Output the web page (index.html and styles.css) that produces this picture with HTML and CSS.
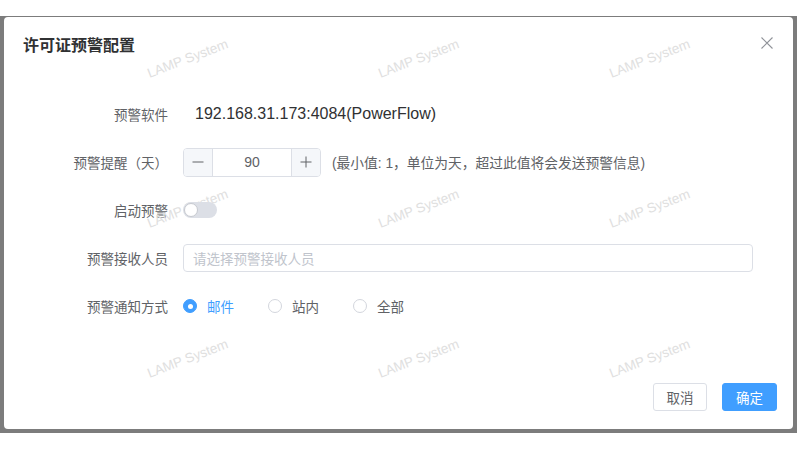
FILE: index.html
```html
<!DOCTYPE html>
<html lang="zh-CN">
<head>
    <meta charset="UTF-8">
    <meta name="viewport" content="width=device-width, initial-scale=1.0">
    <title>许可证预警配置</title>
    <link rel="stylesheet" href="styles.css">
</head>
<body>
    <div class="frame">
        <div class="dialog">
            <div class="watermark">
                <span>LAMP System</span><span>LAMP System</span><span>LAMP System</span>
                <span>LAMP System</span><span>LAMP System</span><span>LAMP System</span>
                <span>LAMP System</span><span>LAMP System</span><span>LAMP System</span>
            </div>

            <div class="dialog-header">
                <span class="dialog-title">许可证预警配置</span>
                <span class="close">
                    <svg width="12" height="12" viewBox="0 0 12 12">
                        <path d="M0.5 0.5 L11.5 11.5 M11.5 0.5 L0.5 11.5" stroke="#909399" stroke-width="1.1" fill="none"/>
                    </svg>
                </span>
            </div>

            <div class="dialog-body">
                <div class="form-row">
                    <label class="form-label">预警软件</label>
                    <div class="form-content">
                        <span class="plain-value">192.168.31.173:4084(PowerFlow)</span>
                    </div>
                </div>

                <div class="form-row">
                    <label class="form-label">预警提醒（天）</label>
                    <div class="form-content">
                        <div class="input-number">
                            <span class="step minus">
                                <svg width="12" height="12" viewBox="0 0 12 12"><path d="M0.5 6 H11.5" stroke="#606266" stroke-width="1"/></svg>
                            </span>
                            <span class="number">90</span>
                            <span class="step plus">
                                <svg width="12" height="12" viewBox="0 0 12 12"><path d="M0.5 6 H11.5 M6 0.5 V11.5" stroke="#606266" stroke-width="1"/></svg>
                            </span>
                        </div>
                        <span class="hint">(最小值: 1，单位为天，超过此值将会发送预警信息)</span>
                    </div>
                </div>

                <div class="form-row">
                    <label class="form-label">启动预警</label>
                    <div class="form-content">
                        <span class="switch"><span class="knob"></span></span>
                    </div>
                </div>

                <div class="form-row">
                    <label class="form-label">预警接收人员</label>
                    <div class="form-content">
                        <div class="select">请选择预警接收人员</div>
                    </div>
                </div>

                <div class="form-row">
                    <label class="form-label">预警通知方式</label>
                    <div class="form-content">
                        <span class="radio checked"><span class="dot"></span>邮件</span>
                        <span class="radio"><span class="dot"></span>站内</span>
                        <span class="radio"><span class="dot"></span>全部</span>
                    </div>
                </div>
            </div>

            <div class="dialog-footer">
                <button class="btn">取消</button>
                <button class="btn btn-primary">确定</button>
            </div>
        </div>
    </div>
</body>
</html>
```

FILE: styles.css
```css
body {
    margin: 0;
    padding: 0;
    background-color: #ffffff;
    font-family: "Liberation Sans", "Noto Sans CJK SC", sans-serif;
    color: #606266;
}
.frame {
    margin-top: 16px;
    width: 797px;
    height: 417px;
    box-sizing: border-box;
    padding: 1px 4px 4px 4px;
    background-color: #7c7c7c;
}
.dialog {
    position: relative;
    height: 100%;
    background: #ffffff;
    border-radius: 4px;
    display: flex;
    flex-direction: column;
    overflow: hidden;
}
.watermark {
    position: absolute;
    left: 68px;
    top: -34px;
    display: grid;
    grid-template-columns: repeat(3, 231px);
    grid-template-rows: repeat(3, 150px);
    place-items: center;
    pointer-events: none;
}
.watermark span {
    font-size: 13.5px;
    color: #e0e0e0;
    transform: rotate(-21deg);
    white-space: nowrap;
}
.dialog-header {
    position: relative;
    height: 54px;
    box-sizing: border-box;
    padding: 20px 20px 0 19px;
}
.dialog-title {
    font-size: 16px;
    line-height: 18px;
    font-weight: bold;
    color: #303133;
}
.close {
    position: absolute;
    top: 20px;
    right: 20px;
    width: 12px;
    height: 12px;
}
.close svg, .step svg {
    display: block;
}
.dialog-body {
    padding-top: 28px;
}
.form-row {
    display: flex;
    align-items: center;
    height: 30px;
    margin-bottom: 18px;
}
.form-label {
    width: 164px;
    text-align: right;
    font-size: 13.5px;
    color: #606266;
    white-space: nowrap;
}
.form-content {
    display: flex;
    align-items: center;
    margin-left: 15px;
    font-size: 13.5px;
}
.plain-value {
    padding-left: 12px;
    font-size: 16px;
    color: #303133;
}
.input-number {
    display: flex;
    width: 138px;
    height: 29px;
    box-sizing: border-box;
    border: 1px solid #dcdfe6;
    border-radius: 4px;
    overflow: hidden;
}
.step {
    width: 28px;
    display: flex;
    align-items: center;
    justify-content: center;
    background-color: #f5f7fa;
}
.minus {
    border-right: 1px solid #dcdfe6;
}
.plus {
    border-left: 1px solid #dcdfe6;
}
.number {
    flex: 1;
    display: flex;
    align-items: center;
    justify-content: center;
    font-size: 14px;
    color: #606266;
}
.hint {
    margin-left: 11px;
    font-size: 13.75px;
    color: #606266;
}
.switch {
    position: relative;
    width: 34px;
    height: 16px;
    border-radius: 8px;
    background-color: #dcdfe6;
}
.knob {
    position: absolute;
    left: 1px;
    top: 1px;
    width: 12px;
    height: 12px;
    border-radius: 50%;
    background: #ffffff;
    border: 1px solid #c6c9cf;
}
.select {
    width: 570px;
    height: 28px;
    box-sizing: border-box;
    padding-left: 9px;
    display: flex;
    align-items: center;
    border: 1px solid #dcdfe6;
    border-radius: 4px;
    color: #c0c4cc;
}
.radio {
    display: flex;
    align-items: center;
    margin-right: 34px;
    color: #606266;
}
.radio .dot {
    width: 14px;
    height: 14px;
    box-sizing: border-box;
    border: 1px solid #d3d6dd;
    border-radius: 50%;
    background: #ffffff;
    margin-right: 10px;
    position: relative;
}
.radio.checked {
    color: #409eff;
}
.radio.checked .dot {
    background: #409eff;
    border-color: #409eff;
}
.radio.checked .dot:after {
    content: '';
    position: absolute;
    left: 50%;
    top: 50%;
    width: 5px;
    height: 5px;
    margin: -2.5px 0 0 -2.5px;
    border-radius: 50%;
    background: #ffffff;
}
.dialog-footer {
    margin-top: auto;
    display: flex;
    justify-content: flex-end;
    gap: 15px;
    padding: 0 16px 18px 0;
}
.btn {
    height: 28px;
    width: 54px;
    padding: 0;
    font-family: inherit;
    font-size: 13.5px;
    color: #606266;
    background: #ffffff;
    border: 1px solid #dcdfe6;
    border-radius: 3px;
}
.btn-primary {
    width: 55px;
    color: #ffffff;
    background: #409eff;
    border-color: #409eff;
}
```
